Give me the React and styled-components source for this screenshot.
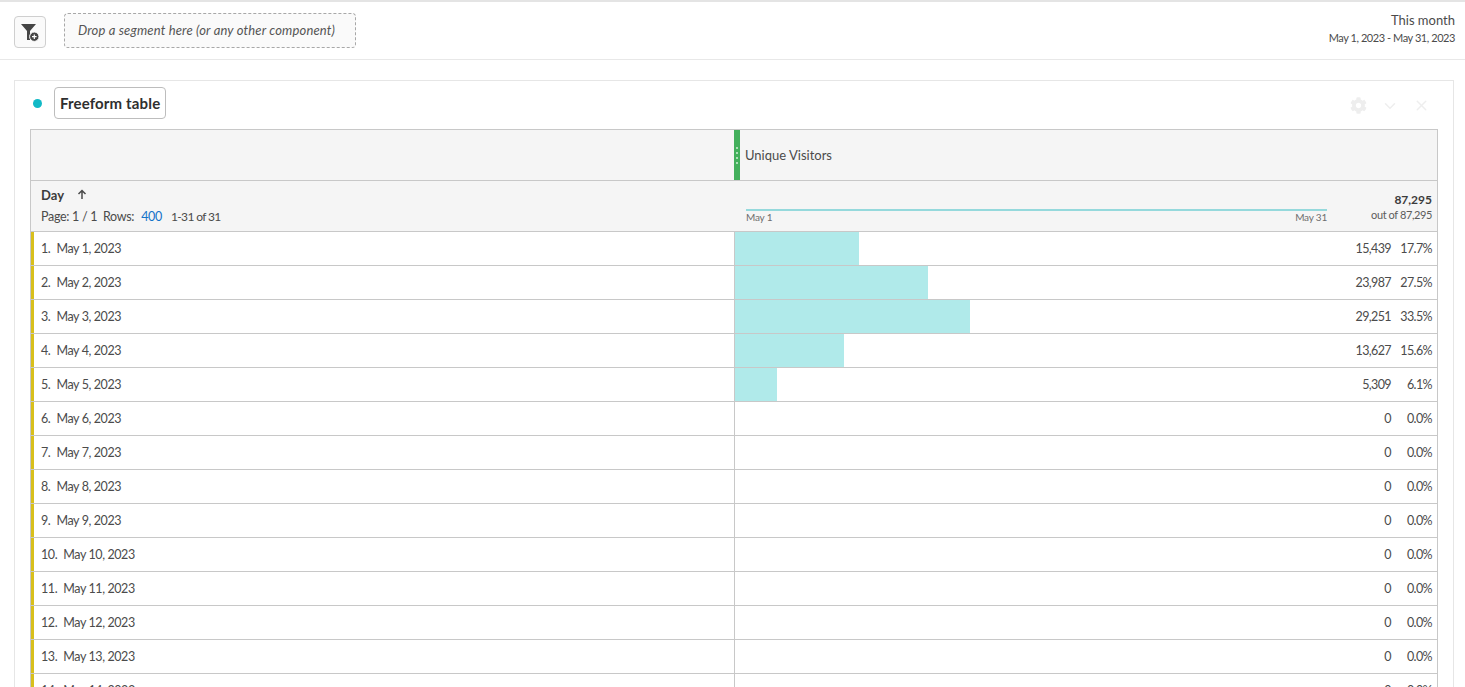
import React from "react";
import styled, { createGlobalStyle } from "styled-components";
import { FaCog } from "react-icons/fa";
import { ChevronDown, X } from "lucide-react";

const GlobalStyle = createGlobalStyle`
  html, body {
    margin: 0;
    height: 687px;
    overflow: hidden;
    background: #fff;
    font-family: Lato, "Liberation Sans", sans-serif;
    color: #4b4b4b;
  }
  * {
    box-sizing: border-box;
  }
`;

const Page = styled.div`
  border-top: 2px solid #e4e4e4;
`;

const TopBar = styled.header`
  height: 58px;
  display: flex;
  align-items: flex-start;
  border-bottom: 1px solid #e8e8e8;
  padding: 11px 10px 0 14px;
`;

const FilterButton = styled.button`
  width: 32px;
  height: 32px;
  margin-top: 3px;
  padding: 0;
  display: flex;
  align-items: center;
  justify-content: center;
  background: #fafafa;
  border: 1px solid #cfcfcf;
  border-radius: 4px;
`;

const DropZone = styled.div`
  width: 292px;
  height: 35px;
  margin-left: 18px;
  display: flex;
  align-items: center;
  padding: 0 0 2px 13px;
  background: #fafafa;
  border: 1px dashed #a8a8a8;
  border-radius: 4px;
  font-size: 13px;
  font-style: italic;
  letter-spacing: 0.16px;
  color: #555;
`;

const DateRange = styled.div`
  margin-left: auto;
  text-align: right;
`;

const RangeName = styled.div`
  font-size: 13px;
  line-height: 16px;
  margin-top: -1px;
  color: #4b4b4b;
`;

const RangeDates = styled.div`
  font-size: 11px;
  line-height: 14px;
  margin-top: 3px;
  letter-spacing: -0.44px;
  color: #4b4b4b;
`;

const Panel = styled.section`
  margin: 20px 11px 0 14px;
  padding: 0 15px;
  background: #fff;
  border: 1px solid #e6e6e6;
`;

const PanelHead = styled.div`
  height: 48px;
  display: flex;
  align-items: center;
  padding-bottom: 4px;
`;

const Dot = styled.span`
  width: 9px;
  height: 9px;
  margin-left: 3px;
  border-radius: 50%;
  background: #12b9c6;
`;

const TitleBox = styled.div`
  height: 32px;
  margin-left: 12px;
  padding: 0 5px;
  display: flex;
  align-items: center;
  background: #fff;
  border: 1px solid #bdbdbd;
  border-radius: 4px;
  font-size: 15px;
  font-weight: 700;
  letter-spacing: 0.15px;
  color: #2f2f2f;
`;

const PanelTools = styled.div`
  margin-left: auto;
  display: flex;
  align-items: center;
  gap: 14px;
  margin-right: 8px;
  padding-top: 5px;
  color: #eeeeee;
`;

const Table = styled.div`
  border: 1px solid #c8c8c8;
  border-bottom: none;
`;

const ColumnHead = styled.div`
  height: 51px;
  display: grid;
  grid-template-columns: 703px 1fr;
  background: #f5f5f5;
  border-bottom: 1px solid #c8c8c8;
`;

const MetricTitle = styled.div`
  display: flex;
  align-items: center;
  font-size: 13px;
  color: #4b4b4b;
`;

const Grip = styled.span`
  width: 6px;
  height: 100%;
  margin-right: 5px;
  display: flex;
  flex-direction: column;
  align-items: center;
  justify-content: center;
  gap: 3px;
  background: #43b05c;

  i {
    width: 2px;
    height: 2px;
    border-radius: 50%;
    background: #cfeed6;
  }
`;

const SummaryRow = styled.div`
  height: 51px;
  display: grid;
  grid-template-columns: 703px 1fr;
  background: #f5f5f5;
  border-bottom: 1px solid #c8c8c8;
`;

const DimensionCell = styled.div`
  padding: 5px 0 0 10px;
`;

const DimensionName = styled.div`
  display: flex;
  align-items: center;
  gap: 13px;
  height: 17px;
  font-size: 13px;
  font-weight: 700;
  color: #3c3c3c;
`;

const Pager = styled.div`
  margin-top: 6px;
  display: flex;
  font-size: 12.5px;
  line-height: 16px;
  letter-spacing: -0.3px;
  color: #4b4b4b;
  white-space: pre;
`;

const PagerLink = styled.span`
  margin-left: 7px;
  color: #1473c9;
`;

const PagerRange = styled.span`
  margin-left: 9px;
  font-size: 12px;
  letter-spacing: -0.65px;
`;

const SummaryMetric = styled.div`
  display: flex;
  padding: 0 5px 0 12px;
`;

const Spark = styled.div`
  width: 581px;
  padding-top: 28px;
`;

const SparkLine = styled.div`
  height: 2px;
  background: #95d9dc;
`;

const SparkLabels = styled.div`
  display: flex;
  justify-content: space-between;
  font-size: 10px;
  line-height: 13px;
  letter-spacing: -0.2px;
  color: #6e6e6e;
`;

const Totals = styled.div`
  margin-left: auto;
  padding-top: 11px;
  text-align: right;
`;

const TotalValue = styled.div`
  font-size: 12px;
  line-height: 15px;
  font-weight: 700;
  color: #3c3c3c;
`;

const TotalOf = styled.div`
  font-size: 11px;
  line-height: 13px;
  margin-top: 1px;
  letter-spacing: -0.4px;
  color: #5c5c5c;
`;

const Row = styled.div`
  height: 34px;
  display: grid;
  grid-template-columns: 703px 1fr;
  border-bottom: 1px solid #c8c8c8;
`;

const RowLabel = styled.div`
  display: flex;
  align-items: center;
  padding-left: 7px;
  border-left: 3px solid #d8bf1c;
  font-size: 12.5px;
  letter-spacing: -0.4px;
  color: #4b4b4b;
`;

const RowIndex = styled.span`
  margin-right: 6px;
`;

const MetricCell = styled.div`
  position: relative;
  display: flex;
  align-items: center;
  justify-content: flex-end;
  padding-right: 5px;
  border-left: 1px solid #c8c8c8;
  font-size: 12.5px;
  letter-spacing: -0.6px;
  color: #4b4b4b;
`;

const Bar = styled.div`
  position: absolute;
  left: 0;
  top: 0;
  bottom: 0;
  background: #b0eaea;
`;

const Value = styled.span`
  position: relative;
`;

const Percent = styled.span`
  position: relative;
  width: 41px;
  text-align: right;
`;

const rows = [
  [15439, 17.7, 124],
  [23987, 27.5, 193],
  [29251, 33.5, 235],
  [13627, 15.6, 109],
  [5309, 6.1, 42],
];

function FilterAddIcon() {
  return (
    <svg width="20" height="20" viewBox="0 0 20 20">
      <path d="M1 2h15l-6 7v9H7V9z" fill="#454545" />
      <circle cx="14.3" cy="14.7" r="4.7" fill="#454545" stroke="#fafafa" />
      <path d="M14.3 12.4v4.6M12 14.7h4.6" stroke="#fff" strokeWidth="1.2" />
    </svg>
  );
}

function SortUpIcon() {
  return (
    <svg width="10" height="11" viewBox="0 0 10 11">
      <path d="M5 10V2M1.5 5 5 1.5 8.5 5" fill="none" stroke="#4b4b4b" strokeWidth="1.5" />
    </svg>
  );
}

export default function App() {
  const days = Array.from({ length: 14 }, (_, i) => i + 1);

  return (
    <Page>
      <GlobalStyle />
      <TopBar>
        <FilterButton>
          <FilterAddIcon />
        </FilterButton>
        <DropZone>Drop a segment here (or any other component)</DropZone>
        <DateRange>
          <RangeName>This month</RangeName>
          <RangeDates>May 1, 2023 - May 31, 2023</RangeDates>
        </DateRange>
      </TopBar>
      <Panel>
        <PanelHead>
          <Dot />
          <TitleBox>Freeform table</TitleBox>
          <PanelTools>
            <FaCog size={17} />
            <ChevronDown size={18} />
            <X size={17} />
          </PanelTools>
        </PanelHead>
        <Table>
          <ColumnHead>
            <div />
            <MetricTitle>
              <Grip>
                <i />
                <i />
                <i />
                <i />
              </Grip>
              Unique Visitors
            </MetricTitle>
          </ColumnHead>
          <SummaryRow>
            <DimensionCell>
              <DimensionName>
                Day
                <SortUpIcon />
              </DimensionName>
              <Pager>
                {"Page: 1 / 1  Rows:"}
                <PagerLink>400</PagerLink>
                <PagerRange>1-31 of 31</PagerRange>
              </Pager>
            </DimensionCell>
            <SummaryMetric>
              <Spark>
                <SparkLine />
                <SparkLabels>
                  <span>May 1</span>
                  <span>May 31</span>
                </SparkLabels>
              </Spark>
              <Totals>
                <TotalValue>87,295</TotalValue>
                <TotalOf>out of 87,295</TotalOf>
              </Totals>
            </SummaryMetric>
          </SummaryRow>
          {days.map((day) => {
            const [value, pct, width] = rows[day - 1] || [0, 0, 0];
            return (
              <Row key={day}>
                <RowLabel>
                  <RowIndex>{day}.</RowIndex>
                  May {day}, 2023
                </RowLabel>
                <MetricCell>
                  {width > 0 && <Bar style={{ width }} />}
                  <Value>{value.toLocaleString("en-US")}</Value>
                  <Percent>{pct.toFixed(1)}%</Percent>
                </MetricCell>
              </Row>
            );
          })}
        </Table>
      </Panel>
    </Page>
  );
}
